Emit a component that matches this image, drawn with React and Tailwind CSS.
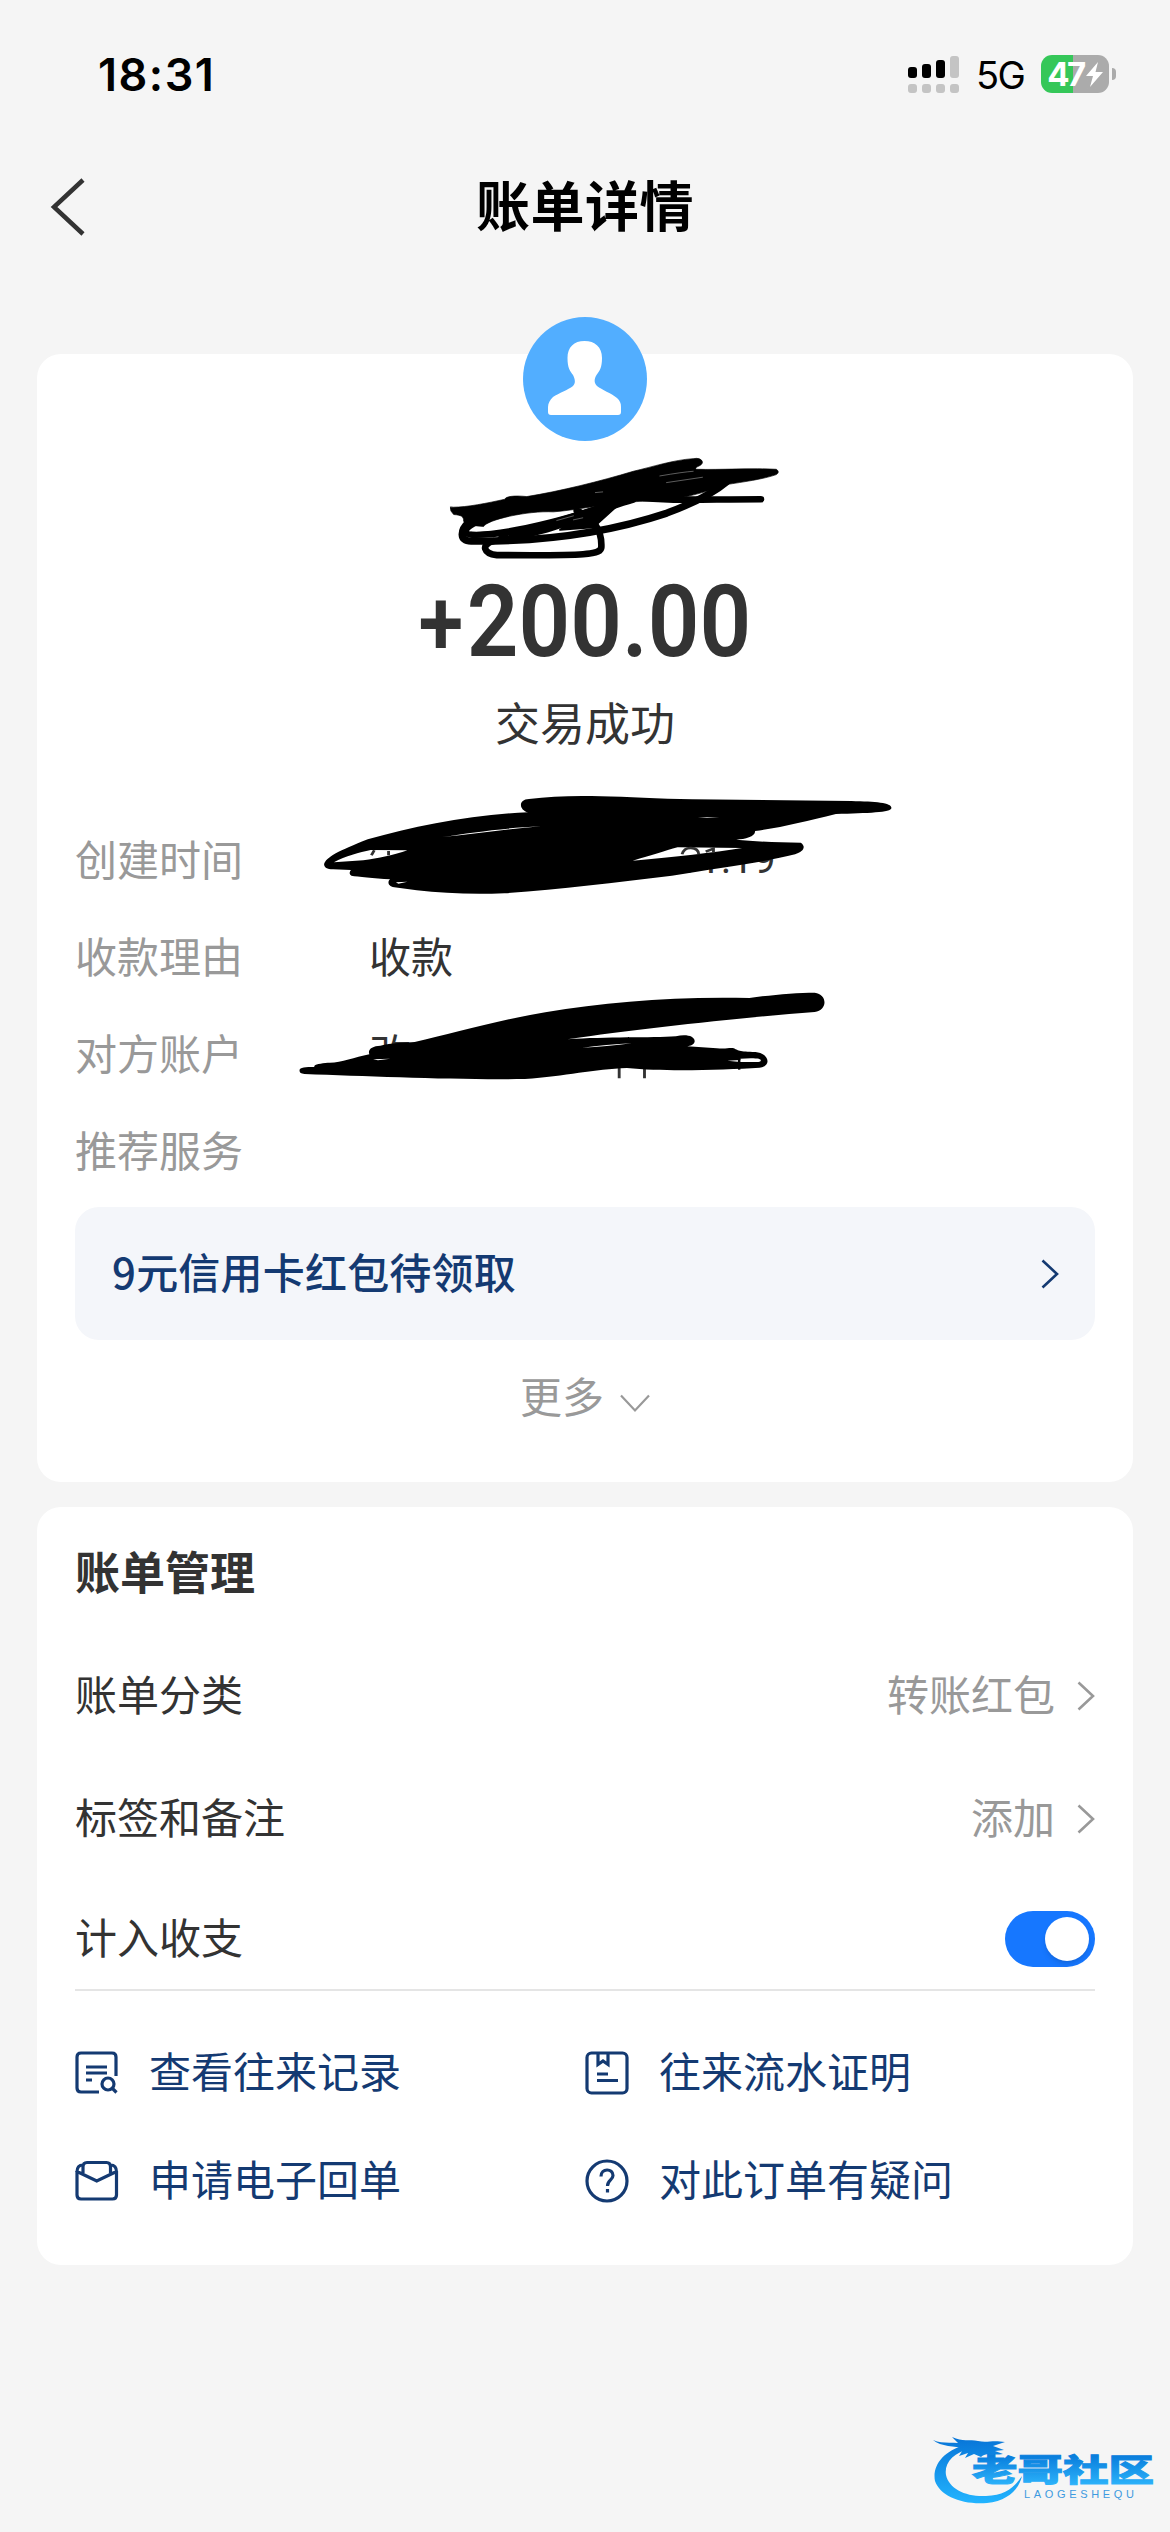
const details = [
  {
    label: "创建时间",
    value: (
      <>
        <span className="w-[307px]">20</span>
        <span className="mt-[4px] font-['Roboto',sans-serif] text-[40px]">01:19</span>
      </>
    ),
  },
  { label: "收款理由", value: "收款" },
  { label: "对方账户", value: "改" },
  { label: "推荐服务", value: null },
];

function Chevron({ className }) {
  return (
    <svg viewBox="0 0 18 30" className={className} fill="none" stroke="currentColor" strokeWidth="2.600">
      <path d="M1.500 1.500L16 15L1.500 28.500" />
    </svg>
  );
}

function StatusBar() {
  return (
    <div className="flex h-[148px] items-center justify-between pl-[98px] pr-[54px] text-black">
      <div className="font-['Inter',sans-serif] text-[45px] font-semibold leading-none tracking-[1.5px]">18:31</div>
      <div className="flex items-center">
        <svg width="52" height="38" viewBox="0 0 52 38">
          <rect x="0" y="12" width="9" height="11" rx="3" />
          <rect x="14" y="9" width="9" height="14" rx="3" />
          <rect x="28" y="5" width="9" height="18" rx="3" />
          <g fill="#c4c4c4">
            <rect x="42" y="1" width="9" height="22" rx="3" />
            {[0, 14, 28, 42].map((x) => (
              <rect key={x} x={x} y="29" width="9" height="9" rx="3" />
            ))}
          </g>
        </svg>
        <div className="ml-[16px] mt-[2px] w-[52px] font-['Inter',sans-serif] text-[38px] leading-none tracking-[-1.5px]">5G</div>
        <div className="ml-[13px] flex items-center">
          <div className="flex h-[38px] w-[68px] items-center justify-center rounded-[11px] bg-linear-to-r from-[#35c759] from-47% to-[#ababab] to-47% text-white">
            <span className="font-['Inter',sans-serif] text-[33px] font-bold leading-none tracking-[-2.5px]">47</span>
            <svg width="17" height="25" viewBox="0 0 17 25" className="ml-[2px]" fill="currentColor">
              <path d="M12 0L0 14H7L4 25L17 10H9.500Z" />
            </svg>
          </div>
          <div className="ml-[3px] h-[12px] w-[4px] rounded-r-full bg-[#ababab]" />
        </div>
      </div>
    </div>
  );
}

function Avatar() {
  return (
    <svg width="124" height="124" viewBox="0 0 124 124" className="-mt-[37px]">
      <circle cx="62" cy="62" r="62" fill="#52aeff" />
      <path
        fill="#fff"
        d="M61.500 24C72 24 79 30 79 41C79 51 76.500 54 73.500 58C71 62 71 66 74 69C79 73 88 76 94 81C97 84 98 86 98 90V95Q98 98 95 98H28Q25 98 25 95V90C25 86 27 83 30 80C36 76 45 73 50 69C53 66 52 62 50 58C47 54 44.500 51 44.500 41C44.500 30 51 24 61.500 24Z"
      />
    </svg>
  );
}

// Marker strokes that cover the payer's name
function NameScribble() {
  return (
    <svg viewBox="0 0 1260 460" className="absolute left-[363px] top-[96px] h-[153px] w-[420px]" fill="none" stroke="#000" strokeLinecap="round" strokeLinejoin="round">
      <path d="M150 172Q148 184 160 194C184 196 190 200 190 214C200 230 220 226 250 230C260 210 380 182 460 186C540 180 680 150 760 154C840 150 930 124 980 104C1030 96 1090 88 1130 74Q1142 66 1130 58C1060 54 960 60 890 58C880 50 908 50 908 36Q904 22 880 26C820 30 760 50 700 64C600 94 480 124 380 140C340 136 316 140 314 148C260 160 200 172 160 172Z" fill="#000" strokeWidth="2" />
      <path d="M700 142C820 154 900 148 1084 148" strokeWidth="20" />
      <path d="M290 196C230 206 160 252 220 256C360 250 520 200 680 150" strokeWidth="18" />
      <path d="M205 218C180 240 176 274 212 274C420 276 620 250 800 190C880 160 940 130 980 96" strokeWidth="22" />
      <path d="M214 254C360 264 540 190 640 160M300 268C460 250 560 190 700 150" strokeWidth="18" />
      <path d="M480 240C520 210 600 180 660 160L580 232Z" fill="#000" strokeWidth="6" />
      <path d="M530 182C570 200 606 230 604 290C606 316 560 318 290 316C250 312 240 284 280 274" strokeWidth="20" />
      <path d="M780 78Q850 66 880 64M800 98L908 82M470 212L520 198M520 210L548 204M586 128L608 126" stroke="#bbb" strokeWidth="1.500" />
    </svg>
  );
}

// Marker strokes over the time and account values
function DetailScribble() {
  return (
    <svg viewBox="0 0 1568 1020" preserveAspectRatio="none" className="absolute left-[243px] top-[416px] h-[340px] w-[640px]">
      <path d="M108 283C112 262 145 242 215 208C330 168 470 133 608 127C585 120 583 88 610 87C700 72 800 78 950 86C1100 90 1240 90 1400 93C1460 95 1499 98 1498 114C1498 128 1440 129 1362 132C1290 154 1230 172 1164 183C1165 200 1140 208 1118 209C1160 214 1220 218 1276 218C1290 230 1282 246 1262 253C1190 276 1080 292 960 317C820 338 680 358 550 370C470 374 400 370 335 361L280 352C262 348 264 332 270 328C230 324 190 320 175 317C168 312 171 304 174 300L130 298C115 298 108 292 108 283Z" />
      <g fill="#fff">
        <path d="M132 277C160 258 195 247 222 240L312 241C280 255 240 265 204 271Z" />
        <path d="M864 272C905 258 945 242 974 232L1132 234C1060 248 970 261 864 272Z" />
        <path d="M398 201C470 188 545 174 640 169C560 176 480 193 398 201Z" />
        <path d="M284 337L312 335L290 341Z" />
        <path d="M1024 141L1076 142L1046 143Z" />
      </g>
      <path d="M224 256L231 241M266 243V256M985 253Q990 233 1007 234Q1025 235 1026 253M1043 245L1062 236V248M831 890V925M893 890V925" fill="none" stroke="#333" strokeWidth="7" />
      <path d="M48 903C46 892 62 891 84 891C82 881 100 881 117 878C148 880 180 862 219 853C214 838 226 828 246 827C270 819 310 818 330 816C420 792 530 751 650 727C800 696 960 679 1150 684C1200 675 1265 668 1310 668C1342 672 1342 722 1310 726C1130 743 880 777 704 808C800 800 910 804 970 799C995 792 1016 798 1016 814C1015 824 1005 828 998 829L1070 835C1095 838 1100 832 1112 835C1120 840 1125 846 1165 846C1198 850 1206 889 1175 893C1090 899 950 906 850 894C770 898 700 918 600 927C430 930 220 919 60 912C51 911 48 908 48 903Z" />
      <path d="M1128 866C1145 864 1165 864 1173 866C1180 869 1180 874 1172 876H1128L1096 872L1128 870Z" fill="#fff" />
      <path d="M740 833C780 827 820 823 862 820C820 826 780 831 740 833ZM228 868L270 866L240 871Z" fill="#fff" />
      <path d="M1125 866V899" stroke="#000" strokeWidth="6" />
    </svg>
  );
}

function RecordsIcon() {
  return (
    <>
      <path d="M41 25V6Q41 2 37 2H6Q2 2 2 6V37Q2 41 6 41H24" />
      <path d="M11 16H32M11 22H32M11 29H17" />
      <circle cx="33" cy="33" r="6" />
      <path d="M37.500 37.500L41.500 41.500" />
    </>
  );
}

function StatementIcon() {
  return (
    <>
      <rect x="2" y="2" width="40" height="40" rx="4.500" />
      <path d="M13 2V13.500L18 10L23 13.500V2M12 23H23M12 29.500H33" />
    </>
  );
}

function ReceiptIcon() {
  return (
    <>
      <path d="M2 12V36Q2 40 6 40H37.500Q41.500 40 41.500 36V12" />
      <path d="M2 13Q2 6 8 6V14M41.500 13Q41.500 6 35.500 6V14M8 8Q8 3.500 12 3.500H31.500Q35.500 3.500 35.500 8M2 12.500L21.750 22L41.500 12.500" />
    </>
  );
}

function QuestionIcon() {
  return (
    <>
      <circle cx="22" cy="22" r="20" />
      <path d="M16 17.500C16 9 28 9 28 16.500C28 21 22.500 21 22.500 27" />
      <path d="M22.500 30V33.500" />
    </>
  );
}

const links = [
  { text: "查看往来记录", Icon: RecordsIcon },
  { text: "往来流水证明", Icon: StatementIcon },
  { text: "申请电子回单", Icon: ReceiptIcon },
  { text: "对此订单有疑问", Icon: QuestionIcon },
];

function CommunityLogo() {
  return (
    <svg width="230" height="80" viewBox="0 0 230 80" className="absolute bottom-[21px] right-[9px]">
      <defs>
        <linearGradient id="logo" gradientUnits="userSpaceOnUse" x1="0" y1="8" x2="0" y2="72">
          <stop offset="0" stopColor="#0876d8" />
          <stop offset="1" stopColor="#22b4ff" />
        </linearGradient>
        <linearGradient id="word" x1="0" y1="0" x2="0" y2="1">
          <stop offset="0.250" stopColor="#0a7fdd" />
          <stop offset="0.900" stopColor="#2db4fb" />
        </linearGradient>
      </defs>
      <g fill="url(#logo)">
        <path d="M34 14C12 20 1 35 4 50C9 65 31 74 56 72C77 70 88 58 91 45C83 57 74 64 55 65C35 66 18 58 15 44C13 32 22 22 40 17Z" />
        <path d="M2 9C10 13 18 11 27 12L21 6C32 11 38 8 47 10C56 12 61 9 74 11L62 15L73 19L64 20L72 23C61 25 56 21 50 26L43 23L34 27L37 22L28 25L33 17C24 15 10 16 2 9Z" />
      </g>
      <text x="41" y="47" textLength="182" lengthAdjust="spacingAndGlyphs" transform="translate(0 12.500) scale(1 .8)" fill="url(#word)" stroke="url(#word)" strokeWidth="1.200" className="font-['Noto_Sans_CJK_SC',sans-serif] text-[38px] font-black">老哥社区</text>
      <text x="93" y="67" textLength="110" fill="#3d9ae0" className="font-['Liberation_Sans',sans-serif] text-[11px]">LAOGESHEQU</text>
    </svg>
  );
}

export default function App() {
  return (
    <div className="relative h-[2532px] w-[1170px] overflow-hidden bg-[#f5f5f5] font-['Noto_Sans_CJK_SC',sans-serif] text-[42px] leading-none text-[#333]">
      <StatusBar />
      <header className="grid h-[118px] grid-cols-[1fr_auto_1fr] items-center px-[50px]">
        <svg width="36" height="58" viewBox="0 0 36 58" fill="none" stroke="#333" strokeWidth="4.500">
          <path d="M33 2L4 29L33 56" />
        </svg>
        <h1 className="-mt-1.5 text-[54px] font-bold tracking-[0.5px] text-black">账单详情</h1>
      </header>

      <main className="px-[37px]">
        <section className="relative mt-[88px] flex h-[1128px] flex-col items-center rounded-[24px] bg-white px-[38px]">
          <Avatar />
          <div className="mt-[110px] flex h-[141px] items-center font-['Roboto',sans-serif] text-[100px] font-semibold">
            <div className="flex scale-x-[0.905] items-center">
              <span className="mr-[4px] mt-[5px] text-[90px]">+</span>
              <span>200.00</span>
            </div>
          </div>
          <div className="flex h-[64px] items-center pb-1.5 text-[45px]">交易成功</div>
          <dl className="mt-[56px] w-full">
            {details.map((d) => (
              <div key={d.label} className="flex h-[97px] items-center pb-1.5">
                <dt className="w-[294px] text-[#999]">{d.label}</dt>
                <dd className="flex">{d.value}</dd>
              </div>
            ))}
          </dl>
          <div className="mt-[7px] flex h-[133px] w-full items-center justify-between rounded-[24px] bg-[#f4f6fa] pl-[37px] pr-[36px] text-[#143a72]">
            <span className="-mt-1.5 font-medium tracking-[0.2px]">9元信用卡红包待领取</span>
            <Chevron className="h-[30px] w-[18px]" />
          </div>
          <div className="flex h-[116px] items-center text-[#999]">
            <span className="-mt-1.5">更多</span>
            <svg width="30" height="19" viewBox="0 0 30 19" className="ml-[16px] mt-[10px]" fill="none" stroke="currentColor" strokeWidth="2.200">
              <path d="M1 1.500L15 16.500L29 1.500" />
            </svg>
          </div>
          <NameScribble />
          <DetailScribble />
        </section>

        <section className="mt-[25px] h-[758px] rounded-[24px] bg-white px-[38px]">
          <h2 className="flex h-[132px] items-center pb-1.5 text-[45px] font-bold">账单管理</h2>
          <div className="flex h-[114px] items-center justify-between">
            <span className="-mt-1.5">账单分类</span>
            <span className="flex items-center gap-[22px] text-[#999]">
              <span className="-mt-1.5">转账红包</span>
              <Chevron className="h-[30px] w-[18px]" />
            </span>
          </div>
          <div className="flex h-[132px] items-center justify-between">
            <span className="-mt-1.5">标签和备注</span>
            <span className="flex items-center gap-[22px] text-[#999]">
              <span className="-mt-1.5">添加</span>
              <Chevron className="h-[30px] w-[18px]" />
            </span>
          </div>
          <div className="flex h-[104px] items-center justify-between pt-1">
            <span className="-mt-1.5">计入收支</span>
            <span className="flex h-[56px] w-[90px] items-center justify-end rounded-full bg-[#1677ff] pr-[6px]">
              <span className="size-[44px] rounded-full bg-white shadow-md" />
            </span>
          </div>
          <div className="h-[2px] bg-[#e5e5e5]" />
          <div className="grid grid-cols-2 pt-7 text-[#143a72]">
            {links.map(({ text, Icon }) => (
              <div key={text} className="flex h-[108px] items-center gap-[30px]">
                <svg width="44" height="44" viewBox="0 0 44 44" fill="none" stroke="currentColor" strokeWidth="3.200">
                  <Icon />
                </svg>
                <span className="-mt-1.5">{text}</span>
              </div>
            ))}
          </div>
        </section>
      </main>
      <CommunityLogo />
    </div>
  );
}
